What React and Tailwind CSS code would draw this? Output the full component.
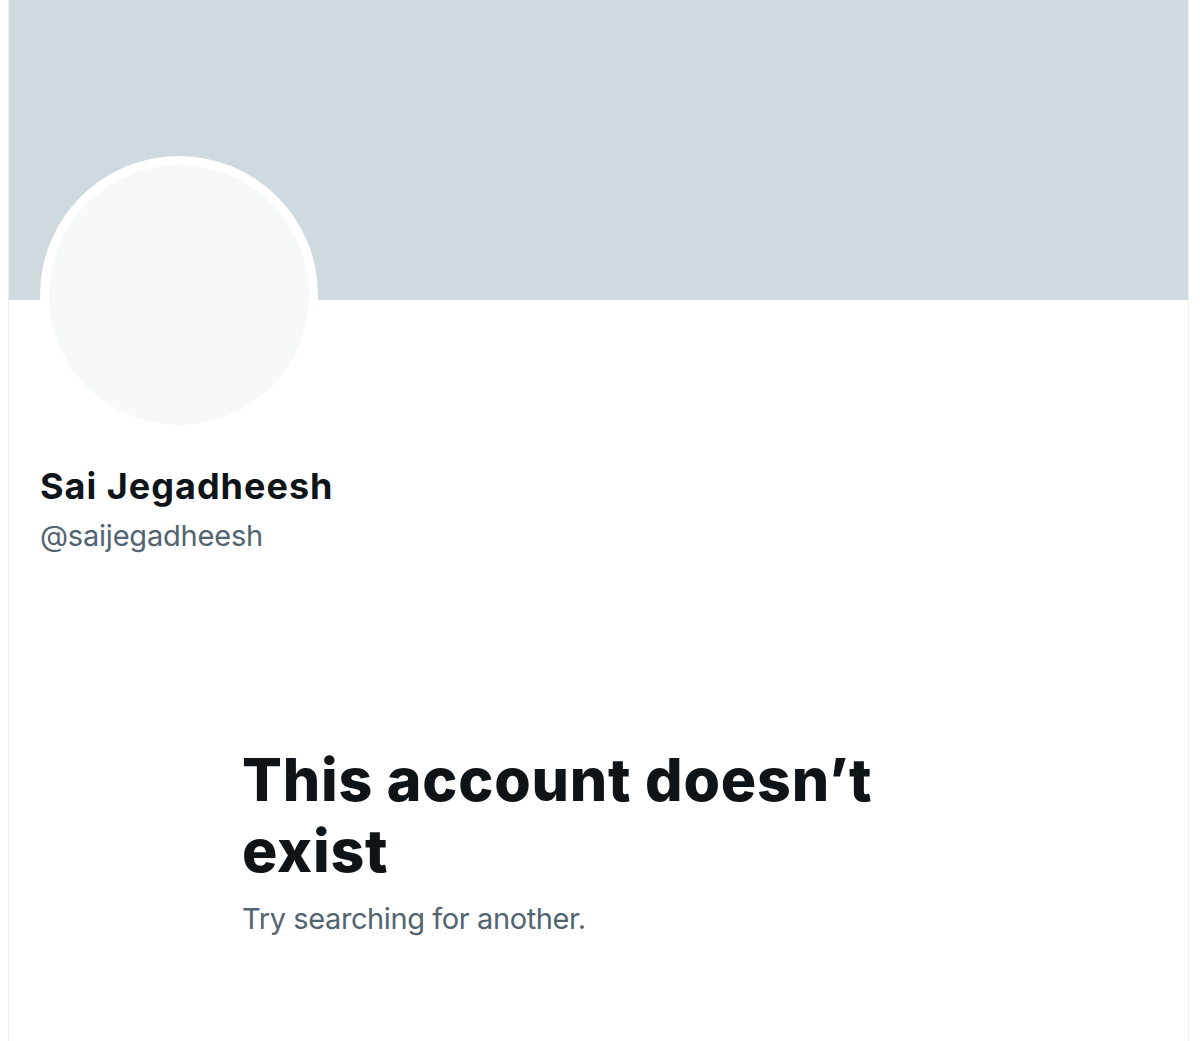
export default function App() {
  return (
    <div className="w-[1200px] h-[1041px] bg-white overflow-hidden" style={{ fontFamily: '"Inter", "Liberation Sans", sans-serif' }}>
      <div className="ml-[8px] w-[1181px] h-full border-x border-[#eceff1] relative flex flex-col">
        <div className="h-[300px] bg-[#cfd9de] shrink-0" />
        <div className="absolute left-[31px] top-[156px] w-[278px] h-[278px] rounded-full bg-white p-[9px]">
          <div className="w-full h-full rounded-full bg-[#f7f9f9]" />
        </div>
        <div className="pl-[31px] pt-[164px]">
          <div className="text-[36px] font-bold text-[#0f1419] leading-[44px] tracking-[1px]">Sai Jegadheesh</div>
          <div className="mt-[8px] text-[29px] text-[#536471] leading-[40px] tracking-[-0.2px]">@saijegadheesh</div>
        </div>
        <div className="pl-[233px] pt-[188px] w-[1000px]">
          <div className="text-[59px] font-extrabold text-[#0f1419] leading-[71px] tracking-[0.8px]">This account doesn’t<br />exist</div>
          <div className="mt-[13px] text-[29px] text-[#536471] leading-[40px] tracking-[-0.4px]">Try searching for another.</div>
        </div>
      </div>
    </div>
  );
}
